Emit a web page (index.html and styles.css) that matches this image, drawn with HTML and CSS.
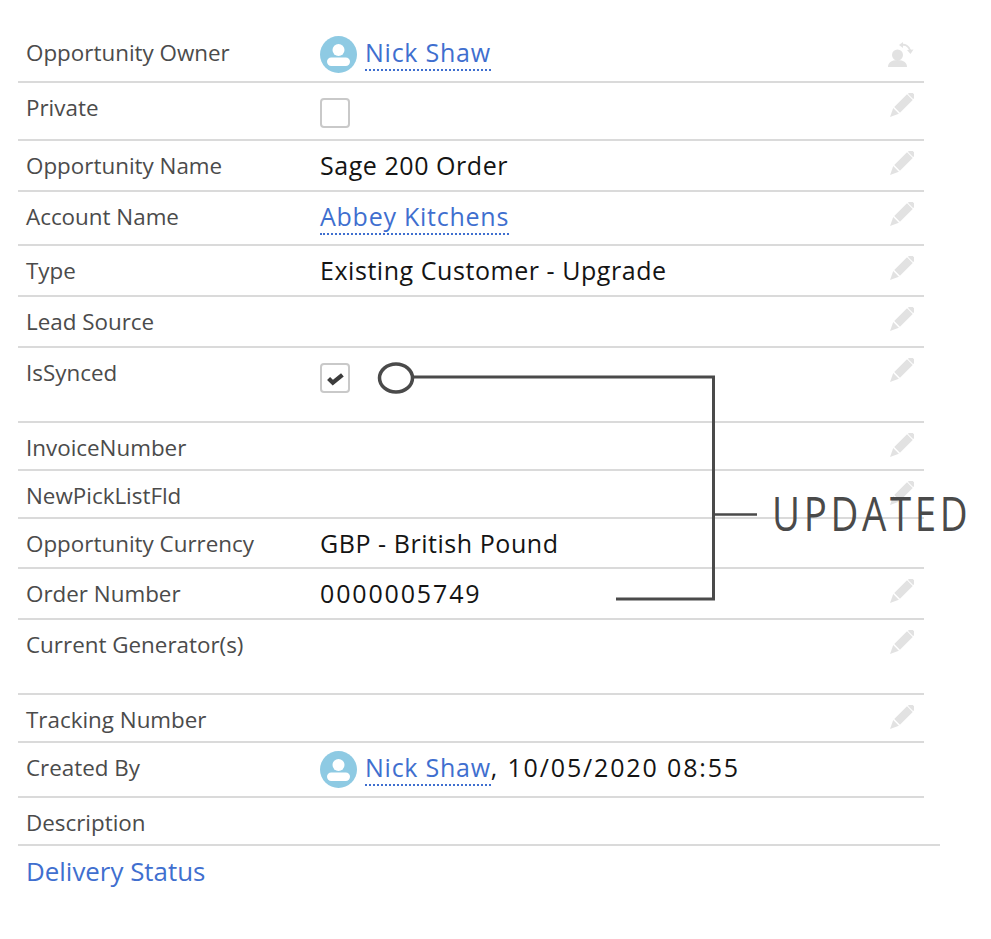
FILE: index.html
```html
<!DOCTYPE html>
<html lang="en">
<head>
<meta charset="utf-8">
<title>Opportunity details</title>
<link rel="stylesheet" href="styles.css">
</head>
<body>
<svg class="defs" width="0" height="0" aria-hidden="true">
  <symbol id="pencil" viewBox="0 0 26 26">
    <g transform="rotate(45 13 13)" fill="currentColor">
      <rect x="9" y="-4.500" width="8" height="4" rx="1.500"/>
      <rect x="9" y="0.500" width="8" height="18"/>
      <path d="M9 20h8L13 28.500z"/>
    </g>
  </symbol>
  <symbol id="avatar" viewBox="0 0 37 37">
    <circle cx="18.500" cy="18.500" r="18.500" fill="#8ecae3"/>
    <circle cx="18.500" cy="14" r="6" fill="#fff"/>
    <rect x="7" y="21.500" width="23" height="8.500" rx="4.200" fill="#fff"/>
  </symbol>
</svg>
<main class="sheet">
  <div class="row"><span class="label">Opportunity Owner</span><span class="value"><svg class="avatar"><use href="#avatar"/></svg><a class="link dotted">Nick Shaw</a></span>
    <svg class="edit swap" viewBox="0 0 26 26"><circle cx="9.500" cy="13" r="5.500" fill="currentColor"/><path d="M0 25c0-4 3-7 9.500-7s9.500 3 9.500 7z" fill="currentColor"/><path d="M13 3c4-1 8 1 9.500 6" fill="none" stroke="currentColor" stroke-width="2"/><path d="M19 8l3.500 4 3-4.500z" fill="currentColor"/><path d="M15 0l-4 3 4 3z" fill="currentColor"/></svg></div>
  <div class="row"><span class="label">Private</span><span class="value"><span class="check"></span></span><svg class="edit"><use href="#pencil"/></svg></div>
  <div class="row"><span class="label">Opportunity Name</span><span class="value">Sage 200 Order</span><svg class="edit"><use href="#pencil"/></svg></div>
  <div class="row"><span class="label">Account Name</span><span class="value"><a class="link dotted">Abbey Kitchens</a></span><svg class="edit"><use href="#pencil"/></svg></div>
  <div class="row"><span class="label">Type</span><span class="value">Existing Customer - Upgrade</span><svg class="edit"><use href="#pencil"/></svg></div>
  <div class="row"><span class="label">Lead Source</span><span class="value"></span><svg class="edit"><use href="#pencil"/></svg></div>
  <div class="row"><span class="label">IsSynced</span><span class="value"><span class="check"><svg class="tick" viewBox="0 0 16 14"><path d="M1.500 7l4 4 9-7.500" fill="none" stroke="currentColor" stroke-width="4"/></svg></span></span><svg class="edit"><use href="#pencil"/></svg></div>
  <div class="row"><span class="label">InvoiceNumber</span><span class="value"></span><svg class="edit"><use href="#pencil"/></svg></div>
  <div class="row"><span class="label">NewPickListFld</span><span class="value"></span><svg class="edit"><use href="#pencil"/></svg></div>
  <div class="row"><span class="label">Opportunity Currency</span><span class="value">GBP - British Pound</span></div>
  <div class="row"><span class="label">Order Number</span><span class="value digits">0000005749</span><svg class="edit"><use href="#pencil"/></svg></div>
  <div class="row"><span class="label">Current Generator(s)</span><span class="value"></span><svg class="edit"><use href="#pencil"/></svg></div>
  <div class="row"><span class="label">Tracking Number</span><span class="value"></span><svg class="edit"><use href="#pencil"/></svg></div>
  <div class="row"><span class="label">Created By</span><span class="value"><svg class="avatar"><use href="#avatar"/></svg><a class="link dotted">Nick Shaw</a><span class="digits">, 10/05/2020 08:55</span></span></div>
  <div class="row wide"><span class="label">Description</span></div>
  <div class="footer"><a class="link">Delivery Status</a></div>
</main>
<svg class="callout" viewBox="0 0 991 939" aria-hidden="true">
  <ellipse cx="396" cy="378" rx="16.500" ry="14" fill="#fff"/>
  <ellipse cx="396" cy="378" rx="16.500" ry="14" fill="none" stroke="#4a4a4a" stroke-width="3.500"/>
  <path d="M412 377H713.500V599H616" fill="none" stroke="#4a4a4a" stroke-width="3"/>
  <path d="M713.500 514.500H757" fill="none" stroke="#4a4a4a" stroke-width="2.500"/>
</svg>
<div class="stamp">UPDATED</div>
</body>
</html>
```
FILE: styles.css
```css
* { box-sizing: border-box; }
html, body { margin: 0; padding: 0; background: #fff; }
body {
  position: relative;
  width: 991px;
  height: 939px;
  overflow: hidden;
  font-family: "Open Sans", "Noto Sans", sans-serif;
}
.defs { position: absolute; }
.sheet {
  display: grid;
  width: 906px;
  margin-left: 18px;
  padding-top: 28px;
  grid-template-columns: 906px;
  grid-template-rows: 55px 58px 51px 54px 51px 51px 75px 48px 48px 50px 51px 75px 48px 55px 48px auto;
}
.row {
  display: flex;
  align-items: flex-start;
  padding: 12px 10px 0 8px;
  border-bottom: 2px solid #dadada;
  position: relative;
}
.row.wide { width: 922px; }
.label {
  width: 294px;
  flex: none;
  font-size: 22.400px;
  line-height: 26px;
  color: #4b4b4b;
}
.value {
  flex: 1;
  display: flex;
  align-items: flex-start;
  white-space: pre-wrap;
  margin-top: -2px;
  font-size: 25px;
  line-height: 28px;
  letter-spacing: 0.550px;
  color: #141414;
}
.digits { letter-spacing: 1.850px; }
.link { color: #3f6fcf; letter-spacing: 0.750px; }
.dotted { border-bottom: 2px dotted #3f6fcf; padding-bottom: 3px; }
.avatar { width: 37px; height: 37px; margin: -2px 8px 0 0; flex: none; }
.check {
  display: flex;
  align-items: center;
  justify-content: center;
  width: 30px;
  height: 30px;
  margin-top: 5px;
  border: 2px solid #c9c9c9;
  border-radius: 4px;
  background: #fff;
}
.tick { width: 17px; height: 15px; color: #3c3c3c; }
.edit {
  flex: none;
  width: 26px;
  height: 26px;
  margin-left: auto;
  margin-top: -2px;
  color: #e2e2e2;
}
.swap { margin-top: 2px; }
.footer {
  padding: 10px 8px 0;
}
.footer .link {
  font-size: 25.900px;
  line-height: 30px;
  letter-spacing: 0;
}
.callout {
  position: absolute;
  left: 0;
  top: 0;
  width: 991px;
  height: 939px;
  pointer-events: none;
}
.stamp {
  position: absolute;
  left: 772px;
  top: 480px;
  font-size: 48px;
  line-height: 66px;
  font-weight: 400;
  letter-spacing: 4.600px;
  color: #4a4a4a;
  transform: scaleX(0.8);
  transform-origin: left center;
}
```
